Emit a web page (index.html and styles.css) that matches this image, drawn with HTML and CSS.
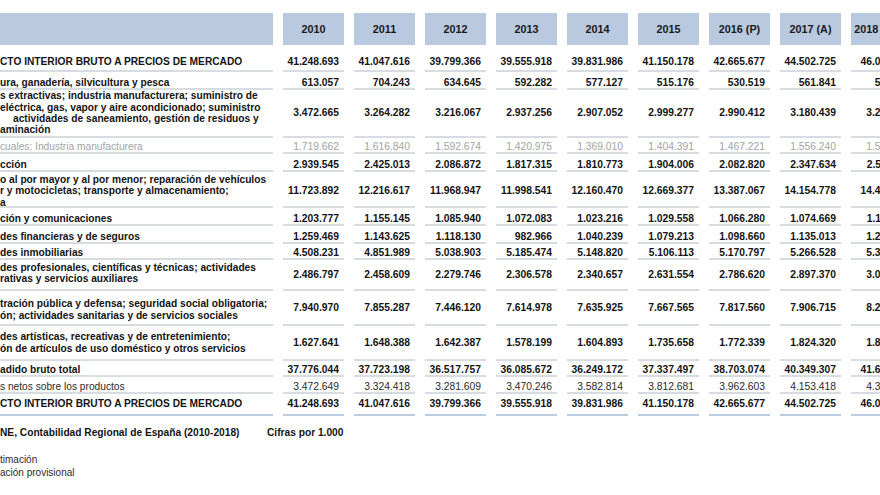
FILE: index.html
```html
<!DOCTYPE html>
<html lang="es">
<head>
<meta charset="utf-8">
<title>PIB por sectores</title>
<link rel="stylesheet" href="styles.css">
</head>
<body>
<div class="sheet">
  <div class="row head">
    <div class="hcell"></div>
    <div class="hcell">2010</div><div class="hcell">2011</div><div class="hcell">2012</div><div class="hcell">2013</div><div class="hcell">2014</div><div class="hcell">2015</div><div class="hcell">2016 (P)</div><div class="hcell">2017 (A)</div><div class="hcell">2018 (1ª E)</div>
  </div>

  <div class="row h27 top">
    <div class="cell label"><div>CTO INTERIOR BRUTO A PRECIOS DE MERCADO</div></div>
    <div class="cell num">41.248.693</div><div class="cell num">41.047.616</div><div class="cell num">39.799.366</div><div class="cell num">39.555.918</div><div class="cell num">39.831.986</div><div class="cell num">41.150.178</div><div class="cell num">42.665.677</div><div class="cell num">44.502.725</div><div class="cell num">46.029.179</div>
  </div>

  <div class="row h18">
    <div class="cell label"><div>ura, ganadería, silvicultura y pesca</div></div>
    <div class="cell num">613.057</div><div class="cell num">704.243</div><div class="cell num">634.645</div><div class="cell num">592.282</div><div class="cell num">577.127</div><div class="cell num">515.176</div><div class="cell num">530.519</div><div class="cell num">561.841</div><div class="cell num">571.215</div>
  </div>

  <div class="row h48 multi">
    <div class="cell label"><div>s extractivas; industria manufacturera; suministro de<br>eléctrica, gas, vapor y aire acondicionado; suministro<br><span class="indent">actividades de saneamiento, gestión de residuos y</span><br>aminación</div></div>
    <div class="cell num">3.472.665</div><div class="cell num">3.264.282</div><div class="cell num">3.216.067</div><div class="cell num">2.937.256</div><div class="cell num">2.907.052</div><div class="cell num">2.999.277</div><div class="cell num">2.990.412</div><div class="cell num">3.180.439</div><div class="cell num">3.275.104</div>
  </div>

  <div class="row h16 sub">
    <div class="cell label"><div>cuales: Industria manufacturera</div></div>
    <div class="cell num">1.719.662</div><div class="cell num">1.616.840</div><div class="cell num">1.592.674</div><div class="cell num">1.420.975</div><div class="cell num">1.369.010</div><div class="cell num">1.404.391</div><div class="cell num">1.467.221</div><div class="cell num">1.556.240</div><div class="cell num">1.589.312</div>
  </div>

  <div class="row h18">
    <div class="cell label"><div>cción</div></div>
    <div class="cell num">2.939.545</div><div class="cell num">2.425.013</div><div class="cell num">2.086.872</div><div class="cell num">1.817.315</div><div class="cell num">1.810.773</div><div class="cell num">1.904.006</div><div class="cell num">2.082.820</div><div class="cell num">2.347.634</div><div class="cell num">2.556.411</div>
  </div>

  <div class="row h36 multi low">
    <div class="cell label"><div>o al por mayor y al por menor; reparación de vehículos<br>r y motocicletas; transporte y almacenamiento;<br>a</div></div>
    <div class="cell num">11.723.892</div><div class="cell num">12.216.617</div><div class="cell num">11.968.947</div><div class="cell num">11.998.541</div><div class="cell num">12.160.470</div><div class="cell num">12.669.377</div><div class="cell num">13.387.067</div><div class="cell num">14.154.778</div><div class="cell num">14.462.091</div>
  </div>

  <div class="row h18">
    <div class="cell label"><div>ción y comunicaciones</div></div>
    <div class="cell num">1.203.777</div><div class="cell num">1.155.145</div><div class="cell num">1.085.940</div><div class="cell num">1.072.083</div><div class="cell num">1.023.216</div><div class="cell num">1.029.558</div><div class="cell num">1.066.280</div><div class="cell num">1.074.669</div><div class="cell num">1.118.604</div>
  </div>

  <div class="row h18">
    <div class="cell label"><div>des financieras y de seguros</div></div>
    <div class="cell num">1.259.469</div><div class="cell num">1.143.625</div><div class="cell num">1.118.130</div><div class="cell num">982.966</div><div class="cell num">1.040.239</div><div class="cell num">1.079.213</div><div class="cell num">1.098.660</div><div class="cell num">1.135.013</div><div class="cell num">1.207.938</div>
  </div>

  <div class="row h16">
    <div class="cell label"><div>des inmobiliarias</div></div>
    <div class="cell num">4.508.231</div><div class="cell num">4.851.989</div><div class="cell num">5.038.903</div><div class="cell num">5.185.474</div><div class="cell num">5.148.820</div><div class="cell num">5.106.113</div><div class="cell num">5.170.797</div><div class="cell num">5.266.528</div><div class="cell num">5.341.286</div>
  </div>

  <div class="row h31 multi">
    <div class="cell label up"><div>des profesionales, científicas y técnicas; actividades<br>rativas y servicios auxiliares</div></div>
    <div class="cell num">2.486.797</div><div class="cell num">2.458.609</div><div class="cell num">2.279.746</div><div class="cell num">2.306.578</div><div class="cell num">2.340.657</div><div class="cell num">2.631.554</div><div class="cell num">2.786.620</div><div class="cell num">2.897.370</div><div class="cell num">3.052.775</div>
  </div>

  <div class="row h35 multi">
    <div class="cell label low"><div>tración pública y defensa; seguridad social obligatoria;<br>ón; actividades sanitarias y de servicios sociales</div></div>
    <div class="cell num">7.940.970</div><div class="cell num">7.855.287</div><div class="cell num">7.446.120</div><div class="cell num">7.614.978</div><div class="cell num">7.635.925</div><div class="cell num">7.667.565</div><div class="cell num">7.817.560</div><div class="cell num">7.906.715</div><div class="cell num">8.214.539</div>
  </div>

  <div class="row h35 multi">
    <div class="cell label"><div>des artísticas, recreativas y de entretenimiento;<br>ón de artículos de uso doméstico y otros servicios</div></div>
    <div class="cell num">1.627.641</div><div class="cell num">1.648.388</div><div class="cell num">1.642.387</div><div class="cell num">1.578.199</div><div class="cell num">1.604.893</div><div class="cell num">1.735.658</div><div class="cell num">1.772.339</div><div class="cell num">1.824.320</div><div class="cell num">1.867.250</div>
  </div>

  <div class="row h16">
    <div class="cell label"><div>adido bruto total</div></div>
    <div class="cell num">37.776.044</div><div class="cell num">37.723.198</div><div class="cell num">36.517.757</div><div class="cell num">36.085.672</div><div class="cell num">36.249.172</div><div class="cell num">37.337.497</div><div class="cell num">38.703.074</div><div class="cell num">40.349.307</div><div class="cell num">41.654.195</div>
  </div>

  <div class="row h17 plain">
    <div class="cell label"><div>s netos sobre los productos</div></div>
    <div class="cell num">3.472.649</div><div class="cell num">3.324.418</div><div class="cell num">3.281.609</div><div class="cell num">3.470.246</div><div class="cell num">3.582.814</div><div class="cell num">3.812.681</div><div class="cell num">3.962.603</div><div class="cell num">4.153.418</div><div class="cell num">4.374.984</div>
  </div>

  <div class="row h22 total">
    <div class="cell label"><div>CTO INTERIOR BRUTO A PRECIOS DE MERCADO</div></div>
    <div class="cell num">41.248.693</div><div class="cell num">41.047.616</div><div class="cell num">39.799.366</div><div class="cell num">39.555.918</div><div class="cell num">39.831.986</div><div class="cell num">41.150.178</div><div class="cell num">42.665.677</div><div class="cell num">44.502.725</div><div class="cell num">46.029.179</div>
  </div>

  <div class="source">
    <span class="source-name">NE, Contabilidad Regional de España (2010-2018)</span>
    <span class="units">Cifras por 1.000</span>
  </div>

  <div class="notes">
    <div>timación</div>
    <div>ación provisional</div>
  </div>
</div>
</body>
</html>
```

FILE: styles.css
```css
html, body {
  margin: 0;
  padding: 0;
}

body {
  width: 880px;
  height: 495px;
  overflow: hidden;
  background: #ffffff;
  font-family: "Liberation Sans", Arial, sans-serif;
  color: #141414;
}

.sheet {
  width: 912px;
  padding-top: 13px;
}

.row {
  display: grid;
  grid-template-columns: 273px repeat(9, 61px);
  column-gap: 10px;
}

.hcell {
  height: 32px;
  background: #b9c9e0;
  display: flex;
  align-items: center;
  justify-content: center;
  font-weight: bold;
  font-size: 10.8px;
  color: #1a1a1a;
  white-space: nowrap;
}

.cell {
  display: flex;
  align-items: flex-end;
  border-bottom: 2px solid #d7dce3;
  box-sizing: border-box;
  font-weight: bold;
  line-height: 11.4px;
}

.label {
  font-size: 10.2px;
  white-space: nowrap;
  overflow: hidden;
}

.num {
  justify-content: flex-end;
  padding-right: 5px;
  font-size: 10.3px;
  white-space: nowrap;
}

.row > .num:last-child {
  padding-right: 0;
}

.indent {
  padding-left: 13px;
}

.multi .cell {
  align-items: center;
}

.multi.low .cell,
.multi .label.low {
  padding-top: 4px;
}

.label.up {
  padding-bottom: 3px;
}

.top .cell {
  padding-bottom: 3px;
}

.sub .cell {
  color: #a3a3a3;
  font-weight: normal;
}

.plain .cell {
  font-weight: normal;
  color: #2a2a2a;
}

.total .cell {
  align-items: center;
  border-bottom-color: #bccbe0;
}

.h16 { height: 16px; }
.h17 { height: 17px; }
.h18 { height: 18px; }
.h22 { height: 22px; }
.h27 { height: 27px; }
.h31 { height: 31px; }
.h35 { height: 35px; }
.h36 { height: 36px; }
.h48 { height: 48px; }

.source {
  display: flex;
  margin-top: 11px;
  font-size: 10.2px;
  line-height: 12px;
  font-weight: bold;
}

.source-name {
  width: 267px;
  white-space: nowrap;
}

.units {
  white-space: nowrap;
}

.notes {
  margin-top: 15px;
  font-size: 10px;
  line-height: 12.7px;
  color: #2a2a2a;
}
```
